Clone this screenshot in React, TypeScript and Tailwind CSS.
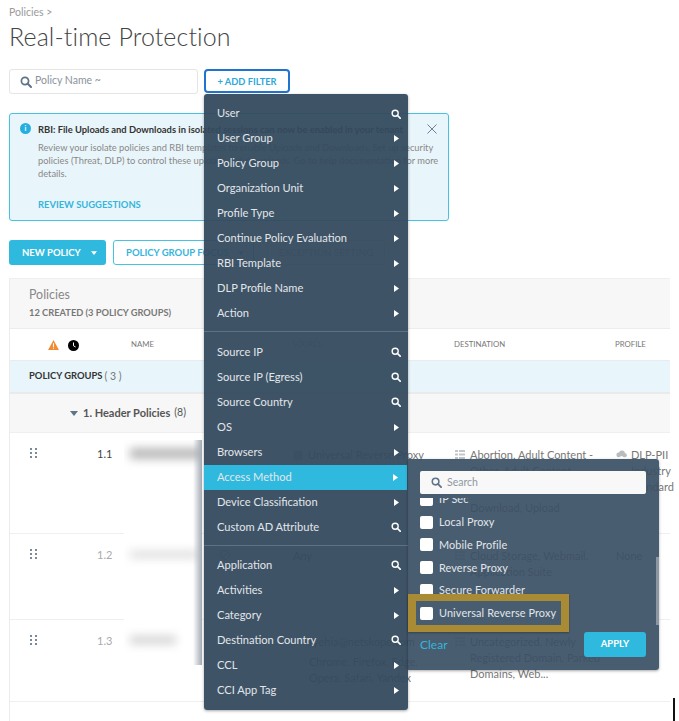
import React from "react";

const Mag = ({ className = "" }: { className?: string }) => (
  <svg viewBox="0 0 12 12" className={className} fill="none" stroke="currentColor">
    <circle cx="5" cy="5" r="3.6" strokeWidth="1.7" />
    <path d="M7.8 7.8 L11 11" strokeWidth="2" strokeLinecap="round" />
  </svg>
);
const RightCaret = () => (
  <svg viewBox="0 0 5 7" className="w-[5px] h-[7px] text-white" fill="currentColor"><path d="M0 0 L5 3.5 L0 7 Z" /></svg>
);
const DownCaret = ({ className = "" }: { className?: string }) => (
  <svg viewBox="0 0 8 5" className={className} fill="currentColor"><path d="M0 0 H8 L4 5 Z" /></svg>
);
const Drag = () => (
  <svg viewBox="0 0 7 10" className="w-[7px] h-[10px] text-[#7b8a99]" fill="currentColor">
    {[0, 4, 8].map((y) => (
      <g key={y}><rect x="0" y={y} width="2" height="2" /><rect x="5" y={y} width="2" height="2" /></g>
    ))}
  </svg>
);
const ListIcon = () => (
  <svg viewBox="0 0 10 9" className="w-[10px] h-[9px] mt-[3px] text-[#c3c7cb] shrink-0" fill="currentColor">
    <rect x="0" y="0" width="3" height="2" /><rect x="4" y="0" width="6" height="2" />
    <rect x="0" y="3.5" width="3" height="2" /><rect x="4" y="3.5" width="6" height="2" />
    <rect x="0" y="7" width="3" height="2" /><rect x="4" y="7" width="6" height="2" />
  </svg>
);
const Cloud = () => (
  <svg viewBox="0 0 12 9" className="w-[11px] h-[9px] mt-[3px] text-[#b9bdc1] shrink-0" fill="currentColor">
    <circle cx="3" cy="5" r="2.6" /><circle cx="6.5" cy="3.2" r="3.2" /><circle cx="9.4" cy="5.2" r="2.4" />
  </svg>
);
const Person = () => (
  <svg viewBox="0 0 10 11" className="w-[10px] h-[11px] mt-[3px] text-[#c3c7cb] shrink-0" fill="currentColor">
    <rect x="0.5" y="0.5" width="9" height="10" rx="1" />
  </svg>
);

type MI = [string, "s" | "c"];
const g1: MI[] = [["User", "s"], ["User Group", "c"], ["Policy Group", "c"], ["Organization Unit", "c"], ["Profile Type", "c"], ["Continue Policy Evaluation", "c"], ["RBI Template", "c"], ["DLP Profile Name", "c"], ["Action", "c"]];
const g2: MI[] = [["Source IP", "s"], ["Source IP (Egress)", "s"], ["Source Country", "s"], ["OS", "c"], ["Browsers", "c"], ["Access Method", "c"], ["Device Classification", "c"], ["Custom AD Attribute", "s"]];
const g3: MI[] = [["Application", "s"], ["Activities", "c"], ["Category", "c"], ["Destination Country", "s"], ["CCL", "c"], ["CCI App Tag", "c"]];

const Item = ({ item }: { item: MI }) => {
  const active = item[0] === "Access Method";
  return (
    <div className={`h-[25px] flex items-center justify-between pl-[13px] ${item[1] === "s" ? "pr-[7px]" : "pr-[9px]"} ${active ? "bg-[#2fb9de] mr-px" : ""}`}>
      <span className="text-[11.1px] text-[#e2e6ea]">{item[0]}</span>
      {item[1] === "s" ? <Mag className="w-[10px] h-[10px] text-white" /> : <RightCaret />}
    </div>
  );
};

const Option = ({ label, className = "" }: { label: string; className?: string }) => (
  <div className={`h-[22.8px] shrink-0 flex items-center gap-[6px] pl-[12px] ${className}`}>
    <span className="w-[13px] h-[13px] bg-white rounded-[2px] shrink-0" />
    <span className="text-[10.9px] text-[#e2e6ea] tracking-[0.1px]">{label}</span>
  </div>
);

const Cell = ({ w, children }: { w: string; children?: React.ReactNode }) => <div className={`${w} shrink-0`}>{children}</div>;

const Row = ({ h, n, dark, src, nameEnd, dest, destExtra, profile, cloud }: { h: string; n: string; dark?: boolean; src: React.ReactNode; nameEnd?: React.ReactNode; dest: string[]; destExtra?: string; profile: string[]; cloud?: boolean }) => (
  <div className={`${h} flex border-t border-[#efefef] text-[11px] text-[#777] pt-[13px] bg-white`}>
    <Cell w="w-[20px]" />
    <Cell w="w-[67px]"><div className="pt-[2px]"><Drag /></div></Cell>
    <Cell w="w-[36px]"><span className={dark ? "text-[#444]" : "text-[#aaa]"}>{n}</span></Cell>
    <Cell w="w-[160px]">{nameEnd}</Cell>
    <Cell w="w-[162px]">
      <div className="leading-[16px] text-[#777] mt-[1px]">{src}</div>
    </Cell>
    <Cell w="w-[161px]">
      <div className="flex gap-[5px] mt-[1px]">
        <ListIcon />
        <div className="leading-[16px]">
          {dest.map((d) => <div key={d} className="whitespace-nowrap">{d}</div>)}
          {destExtra && <div className="mt-[5px] whitespace-nowrap">{destExtra}</div>}
        </div>
      </div>
    </Cell>
    <Cell w="w-[55px]">
      <div className="flex gap-[4px] mt-[1px]">
        {cloud && <Cloud />}
        <div className="leading-[16px] whitespace-nowrap">
          {profile.map((p) => <div key={p}>{p}</div>)}
        </div>
      </div>
    </Cell>
  </div>
);

export default function App() {
  return (
    <div className="relative w-[679px] h-[721px] overflow-hidden bg-white font-['Lato',sans-serif] pl-[9px]">
      <div className="pt-[6px] text-[10.5px] leading-[13px] text-[#9a9a9a]">Policies &gt;</div>
      <h1 className="mt-[2px] text-[25px] leading-[31px] font-light tracking-[0.1px] text-[#444]">Real-time Protection</h1>

      <div className="mt-[17px] flex gap-[6px]">
        <div className="w-[189px] h-[25px] border border-[#e5e5e5] rounded-[3px] flex items-center pl-[10px] gap-[3px]">
          <Mag className="w-[12px] h-[12px] text-[#5f7488]" />
          <span className="text-[10.5px] text-[#8a939b] -mt-[2px]">Policy Name ~</span>
        </div>
        <div className="w-[86px] h-[24px] border-2 border-[#1f74d0] rounded-[4px] flex items-center justify-center pt-[1px] text-[9.3px] font-bold text-[#2ca9dc]">+ ADD FILTER</div>
      </div>

      <div className="mt-[19px] w-[440px] h-[108px] bg-[#e8f5fa] border border-[#45c3e3] rounded-[3px] relative pl-[28px] pt-[8px]">
        <span className="absolute left-[10px] top-[9px] w-[11px] h-[11px] rounded-full bg-[#25aee0] text-white text-[7px] font-bold flex items-center justify-center">i</span>
        <svg viewBox="0 0 11 11" className="absolute right-[11px] top-[10px] w-[10px] h-[10px] text-[#5f7488]" stroke="currentColor" fill="none"><path d="M0.5 0.5 L10.5 10.5 M10.5 0.5 L0.5 10.5" /></svg>
        <div className="text-[9.4px] leading-[15px] font-bold text-[#333] whitespace-nowrap">RBI: File Uploads and Downloads in isolated sessions can now be enabled in your tenant</div>
        <div className="mt-[4px] text-[9.3px] leading-[13px] text-[#888] whitespace-nowrap">
          <div>Review your isolate policies and RBI templates to enable Uploads and Downloads. Set up security</div>
          <div>policies (Threat, DLP) to control these uploads and downloads. Go to help documentation for more</div>
          <div>details.</div>
        </div>
        <div className="mt-[18px] text-[9.4px] font-bold text-[#35b5dc]">REVIEW SUGGESTIONS</div>
      </div>

      <div className="mt-[19px] flex h-[25px] text-[9.5px] font-bold">
        <div className="w-[97px] bg-[#2fb9de] rounded-[3px] text-white flex items-center pl-[13px] pt-[1px] gap-[10px]">
          NEW POLICY <DownCaret className="w-[6px] h-[4px] text-white" />
        </div>
        <div className="ml-[7px] w-[141px] border border-[#45c3e3] rounded-[3px] text-[#35b5dc] flex items-center pl-[12px] pt-[1px] gap-[9px] whitespace-nowrap">
          POLICY GROUP FOCUS <DownCaret className="w-[6px] h-[4px] text-[#35b5dc]" />
        </div>
        <div className="ml-[13px] w-[118px] border border-[#d8d8d8] rounded-[3px] text-[#b5b5b5] flex items-center justify-center pt-[1px] whitespace-nowrap">EXCEPTION SETTING</div>
      </div>

      <div className="mt-[13px] w-[661px] border-l border-[#ececec]">
        <div className="h-[50px] bg-[#f7f7f7] border-t border-[#efefef] pl-[19px] pt-[8px]">
          <div className="text-[12.4px] leading-[15px] text-[#888]">Policies</div>
          <div className="mt-[5px] text-[9.3px] leading-[12px] font-bold text-[#777]">12 CREATED (3 POLICY GROUPS)</div>
        </div>
        <div className="h-[32px] bg-white border-t border-[#ececec] flex items-center text-[7.8px] text-[#777] relative">
          <svg viewBox="0 0 12 11" className="absolute left-[38px] top-[11px] w-[11px] h-[10px]"><path d="M6 0 L12 11 H0 Z" fill="#f28b30" /><rect x="5.4" y="3.5" width="1.2" height="4" fill="#fff" /><rect x="5.4" y="8.4" width="1.2" height="1.2" fill="#fff" /></svg>
          <svg viewBox="0 0 11 11" className="absolute left-[58px] top-[11px] w-[11px] h-[11px]"><circle cx="5.5" cy="5.5" r="5.5" fill="#000" /><path d="M5.5 2.5 V5.8 L7.6 7" stroke="#fff" fill="none" /></svg>
          <span className="absolute left-[121px]">NAME</span>
          <span className="absolute left-[282px] text-[#aaa]">SOURCE</span>
          <span className="absolute left-[444px]">DESTINATION</span>
          <span className="absolute left-[605px]">PROFILE</span>
        </div>
        <div className="h-[32px] bg-[#e8f5fa] border-t border-[#e6ecef] flex items-center pl-[19px] text-[9.4px] text-[#333]">
          <span className="font-bold">POLICY GROUPS</span><span className="ml-[2px] text-[10.5px] text-[#777]">( 3 )</span>
        </div>
        <div className="h-[40px] bg-[#f7f7f7] border-t-2 border-[#eaeaea] flex items-center pl-[60px] text-[#555]">
          <DownCaret className="w-[8px] h-[5px] text-[#5f7488]" />
          <span className="ml-[5px] text-[11px] font-bold">1. Header Policies</span><span className="ml-[4px] text-[10.5px]">(8)</span>
        </div>
        <Row h="h-[101px]" n="1.1" dark
          src={<div className="flex gap-[5px]"><Person />Universal Reverse Proxy</div>}
          dest={["Abortion, Adult Content -", "Other, Adult Content -", "Pornography, Advocacy..."]} destExtra="Download, Upload"
          profile={["DLP-PII", "Industry", "Standard"]} cloud />
        <Row h="h-[86px]" n="1.2"
          nameEnd={
            <svg viewBox="0 0 10 10" className="ml-[87px] mt-[3px] w-[10px] h-[10px] text-[#999]" fill="none" stroke="currentColor"><circle cx="5" cy="5" r="4.5" /><path d="M2 8 L8 2" /></svg>
          }
          src="Any"
          dest={["Cloud Storage, Webmail,", "Application Suite"]}
          profile={["None"]} />
        <Row h="h-[82px]" n="1.3"
          src={<div className="pl-[16px] whitespace-nowrap">ryehia@netskope.com<div className="mt-[4px]">Chrome, Firefox, Edge,</div><div>Opera, Safari, Yandex</div></div>}
          dest={["Uncategorized, Newly", "Registered Domain, Parked", "Domains, Web..."]}
          profile={["None"]} />
        <div className="border-t border-[#efefef] h-[20px]" />
      </div>

      {/* blurred, redacted policy names */}
      <div className="absolute left-[124px] top-[440px] w-[78px] h-[225px] bg-white overflow-hidden">
        <div className="absolute left-[6px] top-[8px] w-[74px] h-[11px] bg-[#b8b8b8] blur-[5px]" />
        <div className="absolute left-[6px] top-[111px] w-[70px] h-[7px] bg-[#dcdcdc] blur-[5px]" />
        <div className="absolute left-[6px] top-[196px] w-[46px] h-[8px] bg-[#d2d2d2] blur-[5px]" />
        <div className="absolute right-0 top-0 bottom-0 w-[9px] bg-gradient-to-r from-transparent to-[#a4abb4]" />
      </div>

      {/* filter menu */}
      <div className="absolute left-[204px] top-[94px] w-[204px] h-[616px] rounded-[3px] bg-[#344a5e]/95 shadow-[0_1px_3px_rgba(0,0,0,0.35)] pt-[7px]">
        {g1.map((i) => <Item key={i[0]} item={i} />)}
        <div className="h-[6px] border-b border-[#5f7283] mb-[7.5px]" />
        {g2.map((i) => <Item key={i[0]} item={i} />)}
        <div className="h-[6px] border-b border-[#5f7283] mb-[7px]" />
        {g3.map((i) => <Item key={i[0]} item={i} />)}
      </div>

      {/* access method submenu */}
      <div className="absolute left-[408px] top-[459px] w-[251px] h-[211px] rounded-r-[3px] bg-[#3a4f64]/[0.92] shadow-[0_1px_3px_rgba(0,0,0,0.35)] overflow-hidden pt-[39px]">
        <div className="h-[126px] overflow-hidden">
          <Option label="IP Sec" className="-mt-[10px]" />
          <Option label="Local Proxy" />
          <Option label="Mobile Profile" />
          <Option label="Reverse Proxy" />
          <Option label="Secure Forwarder" />
          <Option label="Universal Reverse Proxy" />
        </div>
        <div className="absolute left-[12px] top-[12px] w-[226px] h-[23px] bg-white/[0.96] rounded-[2px] flex items-center pl-[11px] gap-[5px]">
          <Mag className="w-[11px] h-[11px] text-[#5f7488]" />
          <span className="text-[10.5px] text-[#8f98a1]">Search</span>
        </div>
        <div className="absolute right-0 top-[98px] w-[3px] h-[68px] bg-[#8b98a4]" />
        <div className="absolute left-[12px] top-[178px] text-[12px] leading-[15px] text-[#33b6dc]">Clear</div>
        <div className="absolute left-[176px] top-[173px] w-[62px] h-[25px] bg-[#2fb9de] rounded-[3px] text-white text-[9.5px] font-bold flex items-center justify-center">APPLY</div>
      </div>

      {/* gold highlight */}
      <div className="absolute left-[408px] top-[594px] w-[161px] h-[38px] border-y-[7px] border-x-[8px] border-[#a98b35] shadow-[0_1px_2px_rgba(0,0,0,0.3)]" />

      <div className="absolute left-[673px] top-[698px] w-[2px] h-[23px] bg-[#111]" />
    </div>
  );
}
